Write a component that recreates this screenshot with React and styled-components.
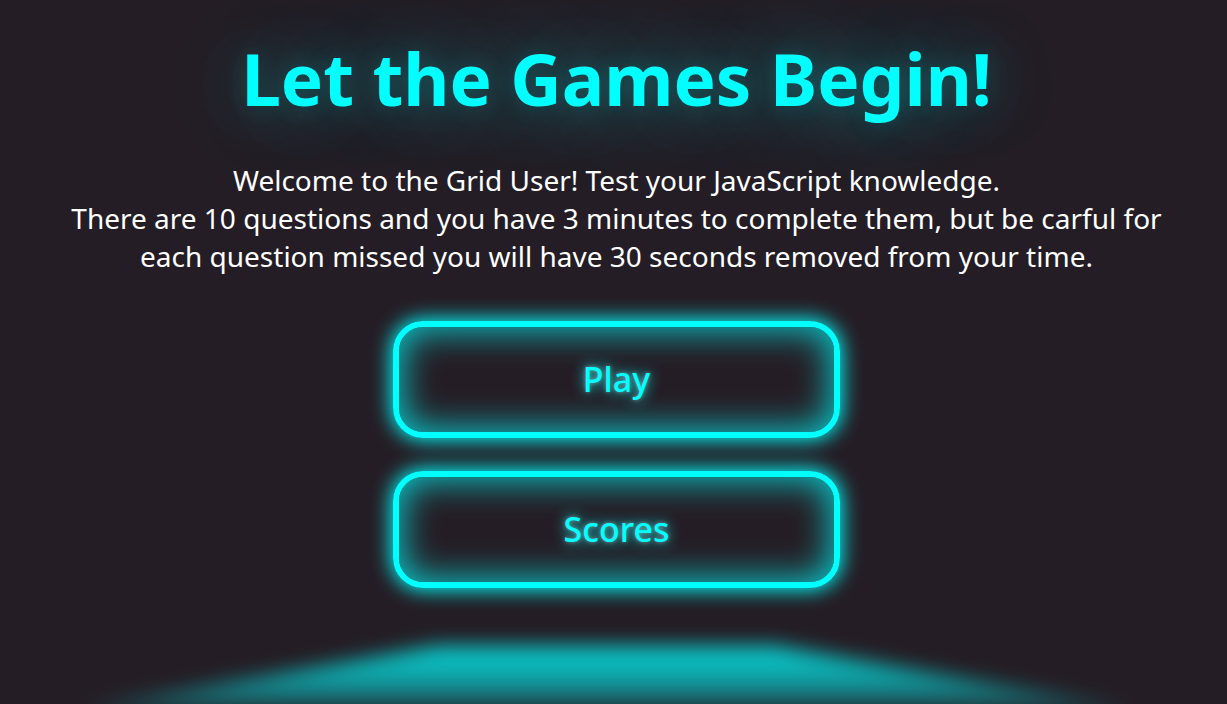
import React from "react";
import styled, { createGlobalStyle } from "styled-components";

const neon = "#00ffff";

const GlobalStyle = createGlobalStyle`
  html, body {
    margin: 0;
    padding: 0;
    background: #251d25;
    height: 100%;
    overflow: hidden;
  }
  body {
    font-family: "Noto Sans", "Open Sans", sans-serif;
    color: #ffffff;
  }
`;

const Page = styled.main`
  position: relative;
  height: 704px;
  display: flex;
  flex-direction: column;
  align-items: center;
  padding: 32px 0 0 6px;
  box-sizing: border-box;
  overflow: hidden;
`;

const Title = styled.h1`
  margin: 0;
  font-size: 71px;
  line-height: 1.32;
  font-weight: 700;
  color: ${neon};
  text-shadow: 0 0 24px rgba(0, 255, 255, 0.18), 0 0 70px rgba(0, 255, 255, 0.35),
    0 0 120px rgba(0, 255, 255, 0.3);
`;

const Intro = styled.p`
  margin: 35px 0 0;
  font-size: 28px;
  line-height: 38px;
  text-align: center;
`;

const Buttons = styled.div`
  display: flex;
  flex-direction: column;
  gap: 33px;
  margin-top: 46px;
`;

const NeonButton = styled.button`
  position: relative;
  width: 447px;
  height: 117px;
  box-sizing: border-box;
  border: 6px solid ${neon};
  border-radius: 30px;
  background: transparent;
  color: ${neon};
  font-family: inherit;
  font-size: 34px;
  font-weight: 500;
  padding: 0;
  cursor: pointer;
  text-shadow: 0 0 4px rgba(255, 255, 255, 0.4), 0 0 14px ${neon};
  box-shadow: inset 0 0 34px 4px rgba(0, 255, 255, 0.75), 0 0 20px 2px ${neon};
`;

const Reflection = styled.div`
  position: absolute;
  left: 78px;
  right: 92px;
  top: 646px;
  height: 90px;
  opacity: 0.8;
  filter: blur(10px);
  pointer-events: none;
`;

const ReflectionShape = styled.div`
  width: 100%;
  height: 100%;
  background: linear-gradient(to bottom, ${neon} 0%, rgba(0, 255, 255, 0.75) 35%, rgba(0, 255, 255, 0) 85%);
  clip-path: polygon(34% 0, 66% 0, 100% 70%, 0 70%);
`;

export default function App() {
  return (
    <>
      <GlobalStyle />
      <Page>
        <Title>Let the Games Begin!</Title>
        <Intro>
          Welcome to the Grid User! Test your JavaScript knowledge.
          <br />
          There are 10 questions and you have 3 minutes to complete them, but be carful for
          <br />
          each question missed you will have 30 seconds removed from your time.
        </Intro>
        <Buttons>
          <NeonButton>Play</NeonButton>
          <NeonButton>Scores</NeonButton>
        </Buttons>
        <Reflection>
          <ReflectionShape />
        </Reflection>
      </Page>
    </>
  );
}
